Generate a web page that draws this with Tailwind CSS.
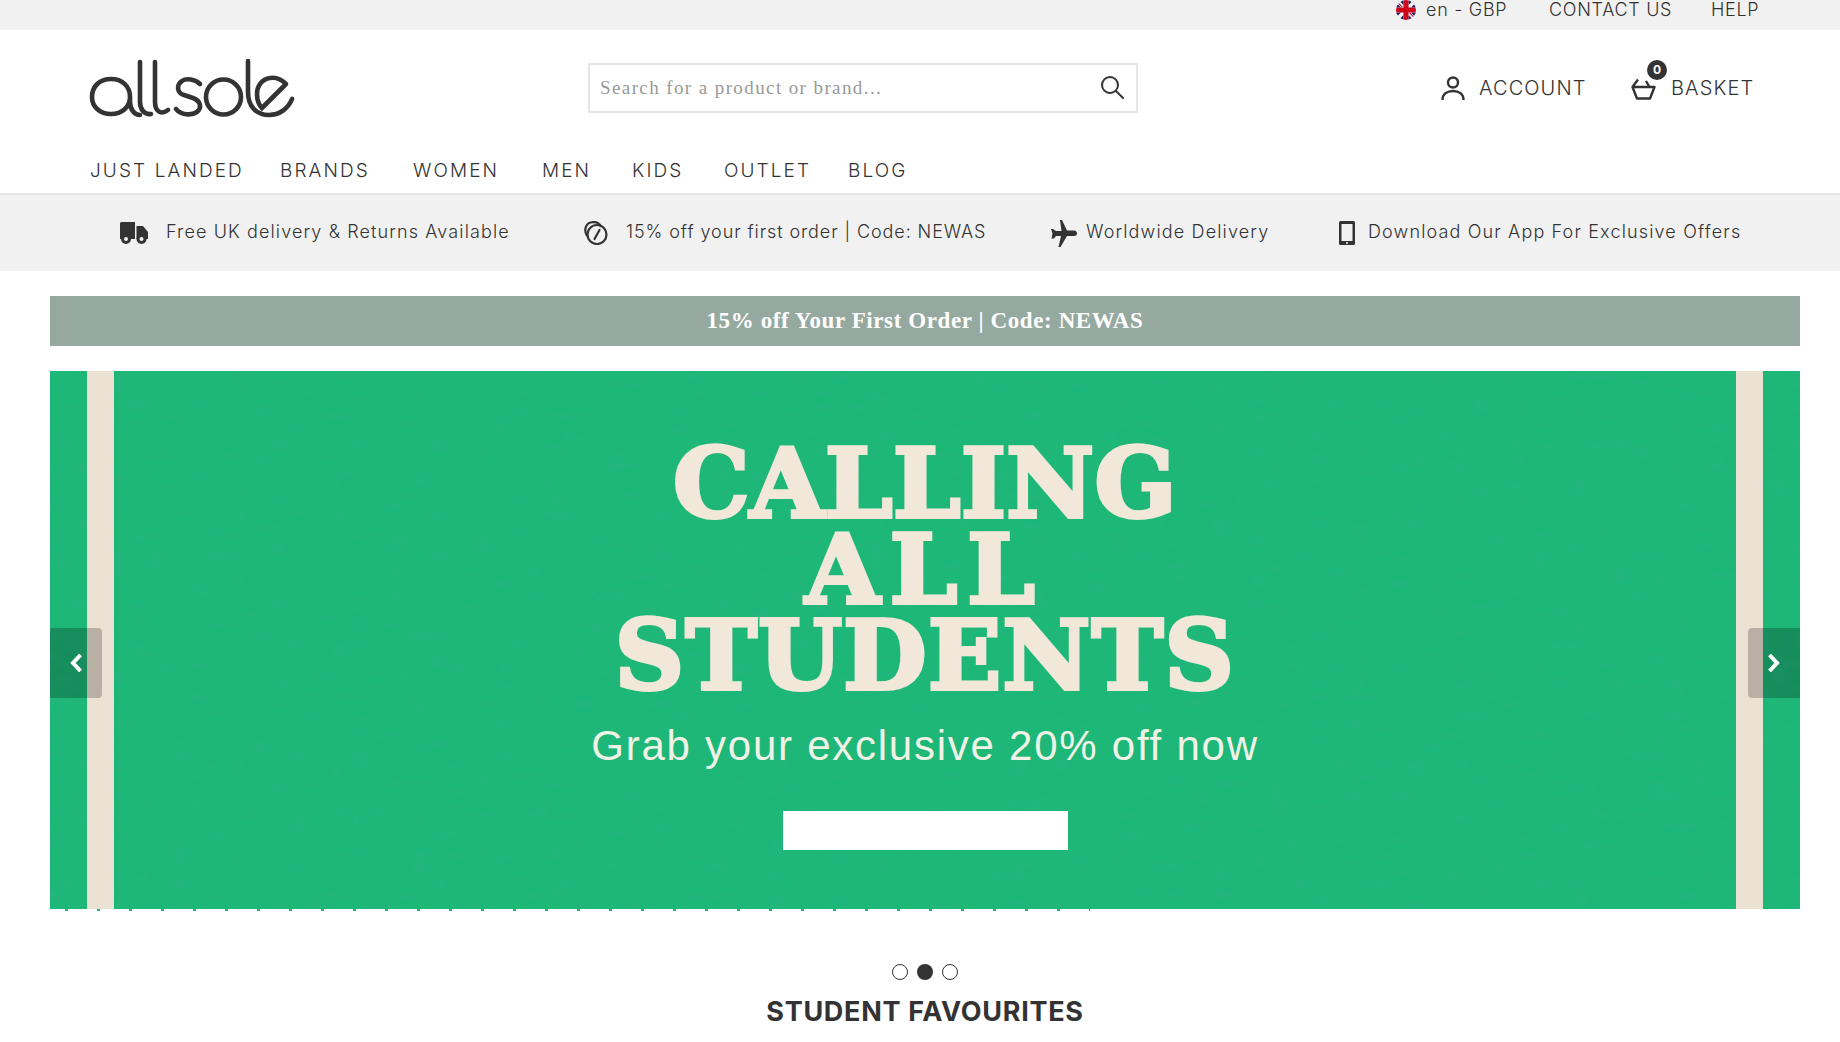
<!DOCTYPE html>
<html lang="en">
<head>
  <meta charset="UTF-8">
  <meta name="viewport" content="width=device-width, initial-scale=1.0">
  <title>allsole</title>
  <script src="https://cdn.jsdelivr.net/npm/@tailwindcss/browser@4"></script>
</head>
<body class="bg-white text-[#333] font-['Inter',sans-serif] font-light overflow-hidden">
  <!-- top strip -->
  <div class="h-[30px] bg-[#f1f1f1] flex justify-end items-start pr-[80px] text-[18px] leading-[20px] tracking-[0.7px]">
    <a class="flex items-start">
      <svg class="w-5 h-5 mr-[10px]" viewBox="0 0 20 20">
        <defs><clipPath id="flag"><circle cx="10" cy="10" r="10"/></clipPath></defs>
        <g clip-path="url(#flag)">
          <rect width="20" height="20" fill="#f4f4f4"/>
          <path d="M2.500 0H7.500V5ZM17.500 0H12.500V5ZM2.500 20H7.500V15ZM17.500 20H12.500V15ZM0 2.500V7.500H5ZM20 2.500V7.500H15ZM0 17.500V12.500H5ZM20 17.500V12.500H15Z" fill="#1a2468"/>
          <path d="M0 0L7 7H5.500L0 1.500ZM20 20L13 13H14.500L20 18.500Z" fill="#d0061c"/>
          <rect x="7.500" width="5" height="20" fill="#d0061c"/>
          <rect y="7.500" width="20" height="5" fill="#d0061c"/>
        </g>
      </svg>
      <span class="w-[82px] whitespace-nowrap">en - GBP</span>
    </a>
    <a class="ml-[41px] w-[121px] whitespace-nowrap">CONTACT US</a>
    <a class="ml-[41px] w-[49px] whitespace-nowrap">HELP</a>
  </div>

  <!-- header -->
  <header class="h-[165px] border-b-2 border-[#e4e4e4]">
    <div class="h-[129px] flex items-start relative">
      <svg class="absolute left-[80px] top-[20px] w-[240px] h-[80px]" viewBox="0 0 240 80" fill="none" stroke="#333" stroke-width="4.6" stroke-linecap="round" role="img" aria-label="allsole">
        <path d="M50 47C50 36 42 29 31 29C19 29 12 37 12 47C12 57 20 64 31 64C42 64 50 57 50 47L50 52C50 60 55 65 60 65"/>
        <path d="M60 12L60 52C60 60 65 65 71 64"/>
        <path d="M75 12L75 52C75 60 80 66 88 60"/>
        <path d="M120 34C115 29 106 28 102 31C96 35 97 43 104 45L113 48C121 51 122 58 117 62C111 66 101 65 96 59"/>
        <circle cx="143.500" cy="47" r="17.500"/>
        <path d="M168 11L168 42C168 56 176 65 189 65C199 65 208 59 212 49"/>
        <path d="M206 34C201 29 196 27 190 28C182 29 177 36 177 44C177 50 178 54 182 58L206 34"/>
      </svg>
      <div class="ml-[588px] mt-[33px] w-[550px] h-[50px] border-2 border-[#e6e6e6] flex items-center justify-between pl-[10px] pr-[12px]">
        <span class="font-['Liberation_Serif',serif] font-normal text-[19px] tracking-[1.4px] text-[#999]">Search for a product or brand...</span>
        <svg class="w-6 h-6 mb-[2px]" viewBox="0 0 24 24" fill="none" stroke="#333" stroke-width="2">
          <circle cx="10" cy="10" r="8"/>
          <path d="M16 16L23 23" stroke-linecap="round"/>
        </svg>
      </div>
      <div class="ml-auto mr-[86px] mt-[45px] flex items-center text-[20px] leading-[26px] font-light tracking-[1.1px]">
        <svg class="w-6 h-6 mr-[14px]" viewBox="0 0 24 24" fill="none" stroke="#333" stroke-width="2.4">
          <circle cx="12" cy="6.5" r="5"/>
          <path d="M1.5 24C1.5 18 6 15 12 15C18 15 22.500 18 22.500 24"/>
        </svg>
        <span class="w-[105px] whitespace-nowrap">ACCOUNT</span>
        <div class="relative ml-[47px] mr-[15px] w-[25px] h-[26px]">
          <svg class="w-[25px] h-[22px] mt-[3px]" viewBox="0 0 25 22" fill="none" stroke="#333" stroke-width="2.4" stroke-linejoin="round">
            <path d="M1.500 9H23.500L19 20.500H6L1.500 9L7 1.500M18.500 9L15 3"/>
          </svg>
          <span class="absolute -top-[15px] left-[16px] w-5 h-5 rounded-full bg-[#333] text-white text-[12px] leading-5 font-bold text-center tracking-normal">0</span>
        </div>
        <span class="w-[83px] whitespace-nowrap">BASKET</span>
      </div>
    </div>
    <nav class="flex pl-[90px] text-[19px] leading-[24px] font-light tracking-[2.1px] whitespace-nowrap">
      <a class="w-[190px]">JUST LANDED</a>
      <a class="w-[133px]">BRANDS</a>
      <a class="w-[129px]">WOMEN</a>
      <a class="w-[90px]">MEN</a>
      <a class="w-[92px]">KIDS</a>
      <a class="w-[124px]">OUTLET</a>
      <a>BLOG</a>
    </nav>
  </header>

  <!-- benefits -->
  <div class="h-[76px] bg-[#f1f1f1] flex items-center pl-[120px] text-[18px] whitespace-nowrap">
    <svg class="w-7 h-[22px] mr-[18px]" viewBox="0 0 28 22" fill="#333">
      <path d="M0 1.500C0 .7.700 0 1.500 0H15V17H0Z"/>
      <path d="M16.500 4H23L28 10V17H16.500Z"/>
      <circle cx="6" cy="17" r="5"/>
      <circle cx="21.500" cy="17" r="5"/>
      <circle cx="6" cy="17" r="2" fill="#f1f1f1"/>
      <circle cx="21.500" cy="17" r="2" fill="#f1f1f1"/>
    </svg>
    <span class="w-[343px] pb-[4px] tracking-[1.12px]">Free UK delivery &amp; Returns Available</span>
    <svg class="ml-[74px] w-[26px] h-6 mr-[17px]" viewBox="0 0 26 24" fill="none" stroke="#333" stroke-width="2.200">
      <path d="M4 15C.5 9 2.500 1.500 10 1.200C14 1 17 3 18 6"/>
      <circle cx="14" cy="13.500" r="9.500"/>
      <path d="M11.500 18L16.500 9" stroke-linecap="round"/>
    </svg>
    <span class="w-[359px] pb-[4px] tracking-[0.9px]">15% off your first order | Code: NEWAS</span>
    <svg class="ml-[66px] w-[26px] h-[27px] mr-[9px]" viewBox="0 0 26 27" fill="#333">
      <path d="M9 0L11 0L16 10.500H23C25 10.500 26 12 26 13.500C26 15 25 16 23 16H16L9.500 27H7.500L10 16H5L3 18.500H0.500L1.500 13.500L0 9H2L5 11H10.500Z"/>
    </svg>
    <span class="w-[183px] pb-[4px] tracking-[1.15px]">Worldwide Delivery</span>
    <svg class="ml-[70px] w-4 h-6 mr-[13px]" viewBox="0 0 16 24">
      <rect width="16" height="24" rx="1.500" fill="#333"/>
      <rect x="2.500" y="3" width="11" height="17" fill="#f1f1f1"/>
      <circle cx="8" cy="22" r="1" fill="#f1f1f1"/>
    </svg>
    <span class="pb-[4px] tracking-[1.15px]">Download Our App For Exclusive Offers</span>
  </div>

  <main class="pl-[50px] pr-[40px] pt-[25px]">
    <div class="h-[50px] bg-[#95a9a0] flex items-center justify-center text-white font-['Liberation_Serif',serif] font-bold text-[23px] tracking-[0.6px]">15% off Your First Order | Code: NEWAS</div>

    <!-- hero slide -->
    <section class="relative h-[538px] mt-[25px] bg-[#1db777] flex flex-col items-center overflow-hidden">
      <svg class="absolute inset-0 w-full h-full opacity-[0.2]" aria-hidden="true">
        <filter id="paper">
          <feTurbulence type="fractalNoise" baseFrequency="0.05 0.1" numOctaves="3" seed="4"/>
          <feColorMatrix values="0 0 0 0 0.04  0 0 0 0 0.45  0 0 0 0 0.28  3 0 0 0 -1.4"/>
        </filter>
        <rect width="100%" height="100%" filter="url(#paper)"/>
      </svg>
      <div class="absolute top-0 bottom-0 left-[37px] w-[27px] bg-[#ece2d4]"></div>
      <div class="absolute top-0 bottom-0 right-[37px] w-[27px] bg-[#ece2d4]"></div>

      <h2 class="relative mt-[70px] text-center font-['DejaVu_Serif',serif] font-bold text-[#f1e8da] text-[96px] leading-[86px] whitespace-nowrap [-webkit-text-stroke:4px_#f1e8da] [stroke-linejoin:round]">
        <span class="block tracking-[0.5px]">CALLING</span>
        <span class="block tracking-[10px]">ALL</span>
        <span class="block tracking-[1.4px]">STUDENTS</span>
      </h2>
      <p class="relative mt-[22px] font-['Liberation_Sans',sans-serif] font-normal text-[42px] leading-[50px] tracking-[1.75px] text-[#eef3e6]">Grab your exclusive 20% off now</p>
      <div class="relative mt-[40px] w-[285px] h-[39px] bg-white"></div>

      <button class="absolute left-0 top-[257px] w-[52px] h-[70px] bg-black/22 rounded-r-[4px] flex items-center justify-center">
        <svg class="w-3 h-[18px]" viewBox="0 0 12 18" fill="none" stroke="#fff" stroke-width="4"><path d="M10.500 1L3 9L10.500 17"/></svg>
      </button>
      <button class="absolute right-0 top-[257px] w-[52px] h-[70px] bg-black/22 rounded-l-[4px] flex items-center justify-center">
        <svg class="w-3 h-[18px]" viewBox="0 0 12 18" fill="none" stroke="#fff" stroke-width="4"><path d="M1.500 1L9 9L1.500 17"/></svg>
      </button>
    </section>
    <div class="h-[2px] ml-[15px] w-[1025px] bg-[repeating-linear-gradient(90deg,#1db777_0_3px,transparent_3px_32px)]"></div>

    <!-- carousel dots -->
    <div class="mt-[53px] flex justify-center gap-[9px]">
      <span class="w-4 h-4 rounded-full border border-[#333]"></span>
      <span class="w-4 h-4 rounded-full bg-[#333]"></span>
      <span class="w-4 h-4 rounded-full border border-[#333]"></span>
    </div>
    <h2 class="mt-[16px] text-center text-[27px] leading-[32px] font-bold tracking-[0.7px]">STUDENT FAVOURITES</h2>
  </main>
</body>
</html>
